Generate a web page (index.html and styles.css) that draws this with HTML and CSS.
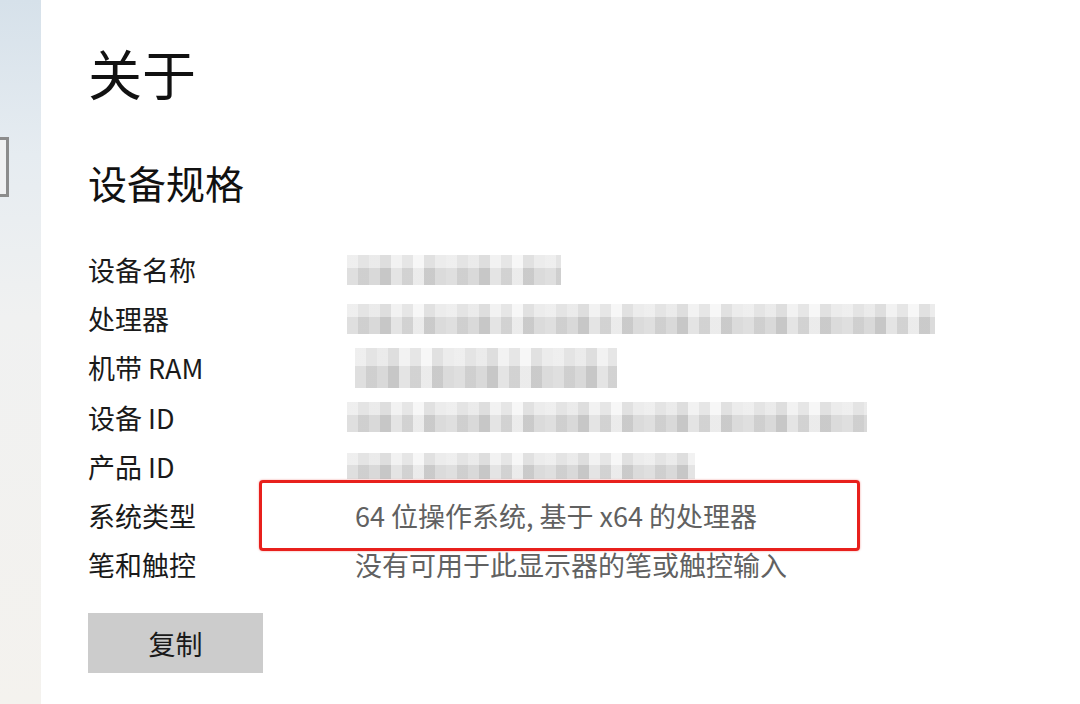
FILE: index.html
```html
<!DOCTYPE html>
<html lang="zh-CN">
<head>
  <meta charset="UTF-8">
  <title>关于</title>
  <meta name="viewport" content="width=device-width, initial-scale=1.0">
  <link rel="stylesheet" href="styles.css">
</head>
<body>

  <div class="page">
    <div class="sidebar">
      <div class="side-window"></div>
    </div>

    <div class="content">
      <h1>关于</h1>
      <h2>设备规格</h2>

      <div class="specs">
        <div class="label">设备名称</div>
        <div class="value"><span class="mosaic m-name"></span></div>

        <div class="label">处理器</div>
        <div class="value"><span class="mosaic m-cpu"></span></div>

        <div class="label">机带 RAM</div>
        <div class="value"><span class="mosaic m-ram"></span></div>

        <div class="label">设备 ID</div>
        <div class="value"><span class="mosaic m-device"></span></div>

        <div class="label">产品 ID</div>
        <div class="value"><span class="mosaic m-product"></span></div>

        <div class="label">系统类型</div>
        <div class="value highlight">64 位操作系统, 基于 x64 的处理器</div>

        <div class="label">笔和触控</div>
        <div class="value">没有可用于此显示器的笔或触控输入</div>
      </div>

      <button class="btn-copy">复制</button>
    </div>
  </div>

</body>
</html>
```

FILE: styles.css
```css
* { box-sizing: border-box; }

body {
  margin: 0;
  background-color: white;
  color: #111;
  font-family: "Noto Sans CJK SC", "Noto Sans", sans-serif;
}

.page {
  display: flex;
  height: 704px;
  overflow: hidden;
}

.sidebar {
  width: 41px;
  flex-shrink: 0;
  padding-top: 137px;
  background: linear-gradient(to bottom, #d6e1ea 0%, #e6ecf1 22%, #f0f1f1 45%, #f4f2ee 100%);
}

.side-window {
  width: 12px;
  height: 60px;
  margin-left: -3px;
  border: 3px solid #8c8c8c;
  background-color: #f0f1f2;
}

.content {
  flex: 1;
  padding-left: 47px;
}

h1 {
  margin: 35px 0 0;
  font-size: 54px;
  font-weight: normal;
  line-height: 76px;
}

h2 {
  margin: 43px 0 0;
  font-size: 39px;
  font-weight: normal;
  line-height: 56px;
}

.specs {
  display: grid;
  grid-template-columns: 267px auto;
  grid-auto-rows: 49.2px;
  margin-top: 35px;
  font-size: 27px;
  align-items: center;
}

.label {
  color: #1a1a1a;
  white-space: nowrap;
}

.value {
  position: relative;
  color: #616161;
  white-space: nowrap;
}

/* red annotation frame round the system type */
.highlight::after {
  content: "";
  position: absolute;
  left: -96px;
  top: -16px;
  width: 595px;
  height: 65px;
  border: 3px solid #e8201c;
  border-radius: 4px;
  box-shadow: 0 0 2px rgba(232, 32, 28, 0.5);
}

.mosaic {
  display: block;
  margin-left: -8px;
  height: 30px;
  background:
    linear-gradient(to bottom, rgba(255, 255, 255, 0.35) 0 45%, rgba(0, 0, 0, 0.03) 45% 100%),
    repeating-linear-gradient(90deg,
      #e6e6e6 0 11px, #d6d6d6 11px 22px, #e0e0e0 22px 33px,
      #cdcdcd 33px 44px, #ebebeb 44px 55px, #d9d9d9 55px 66px,
      #f3f3f3 66px 77px, #d1d1d1 77px 88px, #e2e2e2 88px 99px);
}

.m-name { width: 214px; }
.m-cpu { width: 588px; }
.m-ram { width: 262px; height: 40px; margin-left: 0; }
.m-device { width: 520px; }
.m-product { width: 348px; height: 26px; }

.btn-copy {
  display: block;
  width: 175px;
  height: 60px;
  margin-top: 24px;
  border: none;
  background-color: #cccccc;
  color: #1a1a1a;
  font-family: inherit;
  font-size: 27px;
  cursor: pointer;
}
```
